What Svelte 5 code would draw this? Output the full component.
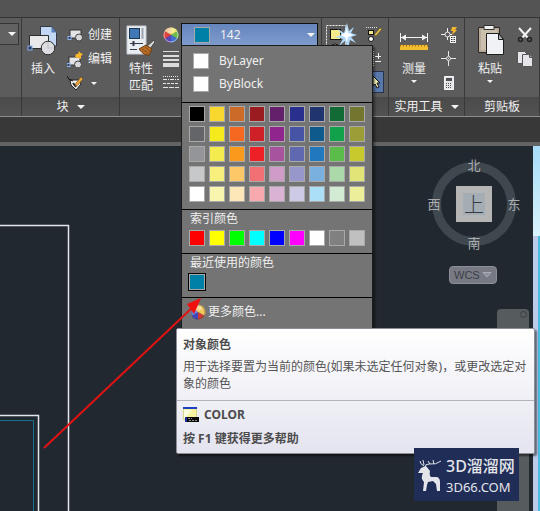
<script lang="ts">
  interface Swatch {
    id: string;
    color: string;
  }

  const palette = [
    ['#000000', '#f8d72f', '#cc6a28', '#9a1c20', '#65206b', '#292f8c', '#20356f', '#126a35', '#73762e'],
    ['#636569', '#f5ea1c', '#f4681f', '#cf2027', '#90258d', '#4654a5', '#0f5a8c', '#12a14b', '#9c9d37'],
    ['#939598', '#f4ec4e', '#f99a1d', '#ec2025', '#a8539d', '#6068b0', '#2278bd', '#5bbc4a', '#c8c92c'],
    ['#c7c8ca', '#f8f07d', '#fdc968', '#f17073', '#cf9bc7', '#9897cb', '#79b0e0', '#abd9a9', '#e2e477'],
    ['#ffffff', '#f9f5ae', '#fde6b7', '#f8a9ad', '#dab2d4', '#cdcae5', '#abdff7', '#d4ebd3', '#ecee9a']
  ];

  const trueColors: Swatch[] = palette.flatMap((row, r) => row.map((color, c) => ({ id: `${r}-${c}`, color })));

  const indexColors: Swatch[] = [
    { id: 'red', color: '#ff0000' },
    { id: 'yellow', color: '#ffff00' },
    { id: 'green', color: '#00ff00' },
    { id: 'cyan', color: '#00ffff' },
    { id: 'blue', color: '#0000ff' },
    { id: 'magenta', color: '#ff00ff' },
    { id: 'white', color: '#ffffff' },
    { id: 'gray', color: '#808080' },
    { id: 'silver', color: '#c0c0c0' }
  ];

  let current = $state('#007fa7');
</script>

{#snippet wheel()}
  <svg class="icon" viewBox="0 0 16 16" aria-hidden="true">
    <path d="M8 8 1.500 4.200A7.500 7.500 0 0 1 8 .5Z" fill="#f0b870" />
    <path d="M8 8V.5a7.500 7.500 0 0 1 6.500 3.700Z" fill="#f4e04a" />
    <path d="m8 8 6.500-3.800a7.500 7.500 0 0 1 0 7.600Z" fill="#6cc04a" />
    <path d="m8 8 6.500 3.800A7.500 7.500 0 0 1 8 15.500Z" fill="#3f6fd0" />
    <path d="M8 8v7.500a7.500 7.500 0 0 1-6.500-3.700Z" fill="#5a46b8" />
    <path d="m8 8-6.500 3.800a7.500 7.500 0 0 1 0-7.600Z" fill="#e0403c" />
    <circle cx="8" cy="8" r="7" fill="none" stroke="#e8e8e8" stroke-opacity=".6" />
    <ellipse cx="8" cy="4" rx="4" ry="2.500" fill="#fff" opacity=".4" />
  </svg>
{/snippet}

{#snippet sphere()}
  <svg class="icon" viewBox="0 0 16 16" aria-hidden="true">
    <path d="M8 8 1.500 11.800A7.500 7.500 0 0 1 8 .5Z" fill="#f3a25c" />
    <path d="M8 8V.5a7.500 7.500 0 0 1 6.500 11.300Z" fill="#f0c95a" />
    <path d="m8 8 6.500 3.800A7.500 7.500 0 0 1 8 15.500Z" fill="#cf3a35" />
    <path d="M8 8v7.500a7.500 7.500 0 0 1-6.500-3.700Z" fill="#3d48c0" />
    <path d="M8 8 1.500 11.800Q0 8 1.500 4.200Z" fill="#5f86dc" />
    <circle cx="8" cy="8" r="7" fill="none" stroke="#4c3f45" stroke-opacity=".5" />
    <ellipse cx="8" cy="4" rx="4" ry="2.500" fill="#fff" opacity=".4" />
  </svg>
{/snippet}

{#snippet blockShape()}
  <rect x="3" y="3" width="11" height="8" fill="#e4e4e6" stroke="#333" />
  <circle cx="12" cy="10.500" r="3.500" fill="#d8d8dc" stroke="#444" />
  <rect x="1" y="9.500" width="3" height="3" fill="#333b55" stroke="#8db4f0" />
{/snippet}

<div class="app">
  <header class="ribbon">
    <section class="panel">
      <div class="tools">
        <button type="button" class="stub" aria-label="列表"><span class="caret"></span></button>
      </div>
      <div class="title"></div>
    </section>

    <section class="panel">
      <div class="tools">
        <button type="button" class="big">
          <svg viewBox="0 0 32 32" aria-hidden="true">
            <path d="M13.500 2.500h11l5 6v13.500h-16z" fill="#c3d8f5" stroke="#333a45" />
            <path d="M24.500 2.500v6h5z" fill="#5a7fb8" />
            <path d="M2.500 11.500h19v13h-19z" fill="#e9e9eb" stroke="#2e2e2e" />
            <circle cx="21" cy="24" r="6.800" fill="#dcdde1" stroke="#2e2e2e" />
            <path d="M21 18v6h6" fill="none" stroke="#c2c3c8" />
            <rect x="1" y="22" width="4" height="4" fill="#2f3b58" stroke="#86b0f0" />
          </svg>
          <span>插入</span>
        </button>
        <div class="stack">
          <button type="button" class="row">
            <svg class="icon" viewBox="0 0 16 16" aria-hidden="true">{@render blockShape()}</svg>
            创建
          </button>
          <button type="button" class="row">
            <svg class="icon" viewBox="0 0 16 16" aria-hidden="true">
              <g transform="translate(-1 3)">{@render blockShape()}</g>
              <path d="m8 6 1-3 2 0 1-3 1.500 2L16 3l-2 2 0 3-3-1z" fill="#f6b62c" />
            </svg>
            编辑
          </button>
          <button type="button" class="row" aria-label="编辑属性">
            <svg class="icon" viewBox="0 0 16 16" aria-hidden="true">
              <path d="M3 5h9l2 4-5 6-5-5z" fill="#f3f3f3" stroke="#222" />
              <path d="M0 1q1 4 6 5" fill="none" stroke="#111" />
              <path d="m6 8 3 4" stroke="#222" stroke-width="2" />
              <path d="m8 11 1-3 5-6 2 2-5 6z" fill="#efa93a" stroke="#6b4210" stroke-width=".6" />
            </svg>
            <span class="caret small"></span>
          </button>
        </div>
      </div>
      <button type="button" class="title">块 <span class="caret"></span></button>
    </section>

    <section class="panel">
      <div class="tools">
        <button type="button" class="big">
          <svg viewBox="0 0 32 32" aria-hidden="true">
            <path d="M2 2h19v28H2z" fill="#e9eef3" stroke="#c9ced6" />
            <rect x="4.500" y="4.500" width="10" height="10" fill="#3f78b4" stroke="#1d3652" />
            <path d="M17.500 4v11" stroke="#9aa3ae" stroke-width="2" />
            <path d="M5 19.500h13M5 25.500h7" stroke="#333c48" />
            <path d="M8.500 17v5" stroke="#333c48" stroke-width="2" />
            <path d="m22 22 7-6 1 2-5 7z" fill="#d4d4d4" stroke="#444" />
            <path d="m14 25 7-4 6 4-3 6q-5 1-10-6z" fill="#b96f27" stroke="#6a3b10" />
            <path d="m17 25 6 4m-3-6 5 4" stroke="#8a4a15" />
          </svg>
          <span>特性<br />匹配</span>
        </button>
        <div class="stack narrow">
          <button type="button" class="row" aria-label="颜色">{@render wheel()}</button>
          <button type="button" class="row" aria-label="线宽">
            <svg class="icon" viewBox="0 0 16 16" aria-hidden="true">
              <path d="M0 0h16v1H0zM0 4h16v2H0zM0 8h16v2H0zM0 12h16v4H0z" fill="#dcdcde" />
            </svg>
          </button>
          <button type="button" class="row" aria-label="线型">
            <svg class="icon" viewBox="0 0 16 16" aria-hidden="true" fill="none" stroke="#e4e4e4">
              <path d="M0 1.500h16" stroke-dasharray="1 1" />
              <path d="M0 4.500h16" stroke-dasharray="4 1 1 1" />
              <path d="M0 8.500h16" stroke-dasharray="3 1" />
              <path d="M0 12.500h16" stroke-dasharray="5 1" />
            </svg>
          </button>
        </div>

        <div class="color-picker">
          <button type="button" class="combo" aria-haspopup="listbox" aria-expanded="true" aria-describedby="color-tip">
            <span class="swatch" style={`--swatch: ${current}`}></span>
            <span class="value">142</span>
            <span class="caret"></span>
          </button>

          <div class="menu">
            <div class="named">
              <button type="button"><span class="swatch plain"></span>ByLayer</button>
              <button type="button"><span class="swatch plain"></span>ByBlock</button>
            </div>
            <div class="group true-colors">
              <div class="swatches">
                {#each trueColors as swatch (swatch.id)}
                  <button
                    type="button"
                    class="swatch"
                    style={`--swatch: ${swatch.color}`}
                    aria-label={swatch.color}
                    onclick={() => (current = swatch.color)}
                  ></button>
                {/each}
              </div>
            </div>
            <div class="group">
              <h2>索引颜色</h2>
              <div class="swatches">
                {#each indexColors as swatch (swatch.id)}
                  <button
                    type="button"
                    class="swatch"
                    style={`--swatch: ${swatch.color}`}
                    aria-label={swatch.id}
                    onclick={() => (current = swatch.color)}
                  ></button>
                {/each}
              </div>
            </div>
            <div class="group">
              <h2>最近使用的颜色</h2>
              <div class="swatches">
                <button type="button" class="swatch selected" aria-label="142"></button>
              </div>
            </div>
            <div class="group more">
              <button type="button">{@render sphere()}更多颜色...</button>
            </div>
          </div>

          <div class="tooltip" id="color-tip" role="tooltip">
            <div class="tip-main">
              <strong>对象颜色</strong>
              <p>用于选择要置为当前的颜色(如果未选定任何对象)，或更改选定对象的颜色</p>
            </div>
            <div class="tip-command">
              <div class="command">
                <svg class="icon" viewBox="0 0 16 16" aria-hidden="true">
                  <path d="M.5 1.500h13v11H.5z" fill="#f7f5a0" stroke="#d6d48a" />
                  <path d="M1 3h8L1 12z" fill="#fdfde0" />
                  <path d="M0 1h14" stroke="#1d3fc4" stroke-width="2" />
                  <path d="M2 10h14v5H2z" fill="#0a0a0a" />
                  <path d="M2 10h2v5H2z" fill="#1a2a9a" />
                  <path d="M5 11.500h4M6 13.500h8" stroke="#888" stroke-dasharray="2 1" />
                </svg>
                COLOR
              </div>
              <div>按 F1 键获得更多帮助</div>
            </div>
          </div>
        </div>
      </div>
      <div class="title"></div>
    </section>

    <section class="panel">
      <div class="tools select-tools">
        <button type="button" aria-label="选择">
          <svg class="icon-lg" viewBox="0 0 32 32" aria-hidden="true">
            <path d="M1.500 2.500h19v20h-19z" fill="none" stroke="#eee" stroke-dasharray="2 1" />
            <rect x="5.500" y="6.500" width="10" height="10" fill="#f2e98c" stroke="#111" />
            <circle cx="10" cy="25" r="4" fill="#ddd" stroke="#111" />
            <path d="m22 0 2 8 5-4-3 6 6 2-6 2 5 6-6-3-2 8-3-7-6 5 4-7-8-2 7-2-4-6 6 4z" fill="#b4dafa" />
            <path d="m22 5 1 5 5 2-5 2-1 5-2-5-5-2 5-2z" fill="#fff" />
          </svg>
        </button>
        <div class="stack narrow">
          <button type="button" class="row" aria-label="快速选择">
            <svg class="icon" viewBox="0 0 16 16" aria-hidden="true">
              <path d="M0 .5h12" stroke="#ddd" stroke-dasharray="1 1" />
              <rect x="2.500" y="3.500" width="5" height="4" fill="#f2e98c" stroke="#111" />
              <circle cx="5" cy="12" r="2.500" fill="#fff" stroke="#111" />
              <path d="m8 8 6-7 2 1-6 7z" fill="#e6c44b" stroke="#554312" stroke-width=".5" />
            </svg>
          </button>
          <button type="button" class="row" aria-label="加减选择">
            <svg class="icon" viewBox="0 0 16 16" aria-hidden="true" fill="none" stroke="#eee">
              <path d="M7.500 0v16" stroke-dasharray="1 1" />
              <path d="M9 5.500h6M12.500 2v6M9 10.500h6" />
            </svg>
          </button>
          <button type="button" class="row pressed" aria-pressed="true" aria-label="指针">
            <svg class="icon" viewBox="0 0 16 16" aria-hidden="true">
              <path d="M6 2v10l2-2 2 4 2-1-2-4h3z" fill="#f4efb4" stroke="#111" />
            </svg>
          </button>
        </div>
      </div>
      <div class="title"></div>
    </section>

    <section class="panel wide-tool">
      <div class="tools">
        <button type="button" class="big">
          <svg viewBox="0 0 32 32" aria-hidden="true">
            <path d="M2.500 9v9M29.500 9v9M3 13.500h26" stroke="#f2f2f2" />
            <path d="m3 13.500 5-3v6zM29 13.500l-5-3v6z" fill="#f2f2f2" />
            <path d="M2 21h28v5H2z" fill="#f2bd30" />
            <path d="M2 21.500h28" stroke="#a4700d" stroke-width="2" stroke-dasharray="1 2" />
          </svg>
          <span>测量</span>
          <span class="caret small"></span>
        </button>
        <div class="stack">
          <button type="button" class="row" aria-label="快速计算">
            <svg class="icon" viewBox="0 0 16 16" aria-hidden="true">
              <path d="M0 7.500h11M6.500 1v12" stroke="#eee" />
              <circle cx="6.500" cy="7.500" r="2.500" fill="#5c5c5c" stroke="#eee" />
              <path d="m11 0 5 0-2 3h2l-5 5 1-4h-2z" fill="#f6b62c" />
              <path d="M9 9h6v7H9z" fill="#f4f4f4" />
              <path d="M10 10.500h4M10 12.500h4M10 14.500h4" stroke="#333" stroke-dasharray="1 .5" />
            </svg>
          </button>
          <button type="button" class="row" aria-label="点坐标">
            <svg class="icon" viewBox="0 0 16 16" aria-hidden="true" fill="none" stroke="#e8e8e8">
              <path d="M7.500 0v5M7.500 10v5M0 7.500h5M10 7.500h5M7 7.500h1" />
              <circle cx="7.500" cy="7.500" r="2" />
            </svg>
          </button>
          <button type="button" class="row" aria-label="计算器">
            <svg class="icon" viewBox="0 0 16 16" aria-hidden="true">
              <path d="M3.500 1.500h9v13h-9z" fill="#e4e4e6" stroke="#f4f4f4" />
              <path d="M5 3h6v3H5z" fill="#4d5158" />
              <path d="M5 8.500h6M5 10.500h6M5 12.500h6" stroke="#555" stroke-dasharray="1 1" />
            </svg>
          </button>
        </div>
      </div>
      <button type="button" class="title">实用工具 <span class="caret"></span></button>
    </section>

    <section class="panel wide-tool last">
      <div class="tools">
        <button type="button" class="big">
          <svg viewBox="0 0 32 32" aria-hidden="true">
            <path d="M4.500 3.500h21v25h-21z" fill="#b9ac9a" stroke="#2b2724" />
            <path d="M7 6h16v20H7z" fill="#cbbfae" />
            <path d="M10 1.500h10v4H10z" fill="#f0f0f0" stroke="#333" />
            <path d="M12.500 9.500h12l5 6v15h-17z" fill="#f1f2f5" stroke="#1d1d1d" />
            <path d="M24.500 9.500v6h5z" fill="#b4b7bf" stroke="#1d1d1d" />
          </svg>
          <span>粘贴</span>
          <span class="caret small"></span>
        </button>
        <div class="stack">
          <button type="button" class="row" aria-label="剪切">
            <svg class="icon" viewBox="0 0 16 16" aria-hidden="true" fill="none">
              <path d="m2 1 9 10M14 1 5 11" stroke="#f4f4f4" stroke-width="2" />
              <circle cx="3.500" cy="12.500" r="2" stroke="#222" stroke-width="1.500" />
              <circle cx="12.500" cy="12.500" r="2" stroke="#222" stroke-width="1.500" />
            </svg>
          </button>
          <button type="button" class="row" aria-label="复制">
            <svg class="icon" viewBox="0 0 16 16" aria-hidden="true" fill="#e6e6ea" stroke="#555">
              <path d="M.5.5h7l3 3v9H.500z" />
              <path d="M5.500 3.500h7l3 3v9h-10z" />
              <path d="M12.500 3.500v3h3" fill="#999" />
            </svg>
          </button>
        </div>
      </div>
      <div class="title">剪贴板</div>
    </section>
  </header>

  <div class="file-tabs"></div>

  <main class="canvas">
    <svg class="drawing" aria-hidden="true">
      <svg y="78" overflow="visible" fill="none">
        <path d="M0 1.500h68.500V900" stroke="#e4e7ea" stroke-width="1.500" />
        <path d="M0 191.500h38.500V900" stroke="#e4e7ea" stroke-width="1.500" />
        <path d="M0 196.500h33.500V900" stroke="#14728c" />
      </svg>
    </svg>

    <div class="side">
      <div class="compass">
        <span class="north">北</span>
        <span class="west">西</span>
        <button type="button" class="cube"><span>上</span></button>
        <span class="east">东</span>
        <span class="south">南</span>
      </div>
      <button type="button" class="wcs">
        WCS
        <svg viewBox="0 0 10 8" aria-hidden="true"><path d="M1 1.500h8L5 6z" fill="#8e909b" stroke="#a9acb6" /></svg>
      </button>
      <div class="navbar"><span class="close"></span></div>
    </div>
    <div class="edge"></div>
  </main>

  <svg class="arrow" viewBox="0 0 170 160" aria-hidden="true">
    <path d="M4 150 154 8" stroke="#e01212" stroke-width="2" />
    <path d="m161 0-14 6 7 10z" fill="#f01010" />
  </svg>

  <a class="watermark" href="#3d66">
    <svg viewBox="0 0 26 34" aria-hidden="true">
      <path
        d="M1 15 4 10 9 8l4 5q-1 4 1 6h6q3 1 3 5v9h-3l-1-7-3-3-5 1-1 3-1 6H6l1-9q-4-4-1-9z"
        fill="#e3e5ea"
      />
      <path d="M8 9q0-3 4-3 7 1 12-3M7 8Q3 6 3 3M7 7 6 2M13 6l-2-3m6 3-1-4" fill="none" stroke="#e3e5ea" />
    </svg>
    <span class="brand"><b>3D溜溜网</b><small>3D66.COM</small></span>
  </a>
</div>

<style>
  :global(body) {
    margin: 0;
  }

  .app {
    position: relative;
    display: flex;
    flex-direction: column;
    min-height: 100vh;
    overflow: hidden;
    background: #222830;
    color: #f0f0f0;
    font-family: 'Noto Sans', 'Noto Sans CJK SC', sans-serif;
    font-size: 12px;
    line-height: 18px;
  }

  button {
    margin: 0;
    padding: 0;
    border: 0;
    background: none;
    color: inherit;
    font: inherit;
    cursor: pointer;
  }

  svg {
    display: block;
  }

  .icon {
    width: 16px;
    height: 16px;
    flex: none;
  }

  .icon-lg {
    width: 32px;
    height: 32px;
  }

  .caret {
    display: inline-block;
    flex: none;
    border: 4px solid transparent;
    border-top-color: #f4f4f4;
    border-bottom: 0;
  }

  .caret.small {
    border-width: 3px;
    border-bottom: 0;
  }

  .ribbon {
    display: grid;
    grid-template-columns: 21px 98px 1fr 67px 76px 76px;
    padding-top: 17px;
    background: #545454;
    border-bottom: 1px solid #8c8c8c;
  }

  .panel {
    display: flex;
    flex-direction: column;
    min-width: 0;
    border-top: 1px solid #333;
    background: #5c5c5c;
  }

  .panel + .panel {
    border-left: 1px solid #393939;
  }

  .panel.last {
    border-right: 1px solid #393939;
  }

  .tools {
    display: flex;
    height: 79px;
    padding-top: 5px;
    box-sizing: border-box;
  }

  .title {
    display: flex;
    align-items: center;
    justify-content: center;
    gap: 8px;
    height: 19px;
    background: linear-gradient(#4a4a4a, #525252);
  }

  .stub {
    display: flex;
    align-items: center;
    justify-content: flex-end;
    width: 19px;
    height: 22px;
    padding-right: 2px;
    border: 1px solid #363636;
    border-left: 0;
    background: #626262;
  }

  .big {
    display: flex;
    flex-direction: column;
    align-items: center;
    width: 42px;
    line-height: 17px;
  }

  .wide-tool .big {
    width: 50px;
  }

  .big svg {
    width: 32px;
    height: 32px;
    margin: 1px 0 4px;
  }

  .big .caret {
    margin-top: 3px;
  }

  .stack {
    display: flex;
    flex-direction: column;
    padding-left: 3px;
  }

  .stack.narrow {
    padding: 0 2px 0 1px;
  }

  .row {
    display: flex;
    align-items: center;
    gap: 5px;
    height: 24px;
  }

  .row .caret {
    margin-left: 3px;
  }

  .select-tools {
    padding-left: 3px;
  }

  .select-tools > button {
    align-self: flex-start;
  }

  .select-tools .narrow {
    padding-left: 9px;
  }

  .pressed {
    border: 1px solid #26344e;
    background: #5878ac;
    height: 22px;
  }

  .wide-tool .stack {
    padding-left: 2px;
  }

  .color-picker {
    position: relative;
    flex: 1;
    margin-right: 3px;
  }

  .combo {
    display: flex;
    align-items: center;
    width: 100%;
    height: 23px;
    padding: 0 2px 0 12px;
    border: 1px solid #111;
    background: linear-gradient(#6585bc, #7e9bcd);
  }

  .combo .value {
    flex: 1;
    padding-left: 10px;
    text-align: left;
  }

  .swatch {
    flex: none;
    box-sizing: border-box;
    width: 16px;
    height: 16px;
    border: 1px solid #a9a9a9;
    background: var(--swatch);
  }

  .swatch.plain {
    background: #fff;
  }

  .menu {
    position: absolute;
    z-index: 2;
    top: 22px;
    left: 0;
    width: 190px;
    border: 1px solid #1c1c1c;
    background: #747474;
    box-shadow: 2px 2px 2px rgb(0 0 0 / 40%);
  }

  .named {
    display: flex;
    flex-direction: column;
    gap: 5px;
    padding: 6px 11px 9px;
  }

  .named button {
    display: flex;
    align-items: center;
    gap: 10px;
    line-height: 18px;
  }

  .group {
    padding: 0 7px 7px;
    border-top: 1px solid #000;
  }

  .group.true-colors {
    padding-top: 3px;
  }

  .group h2 {
    margin: 0 0 2px 1px;
    font-size: 12px;
    font-weight: 400;
    line-height: 18px;
  }

  .swatches {
    display: grid;
    grid-template-columns: repeat(9, 16px);
    gap: 4px;
  }

  .swatch.selected {
    outline: 1px solid #000;
    background: #007fa7;
  }

  .more {
    padding: 5px 8px 18px;
  }

  .more button {
    display: flex;
    align-items: center;
    gap: 2px;
  }

  .tooltip {
    position: absolute;
    z-index: 3;
    top: 305px;
    left: -5px;
    width: 357px;
    border: 1px solid #8d8d96;
    border-radius: 2px;
    background: linear-gradient(#fff, #e4e4f0);
    box-shadow: 2px 2px 2px rgb(0 0 0 / 50%);
    color: #4c4c4c;
  }

  .tip-main {
    padding: 7px 2px 8px 6px;
    border-bottom: 1px solid #b4b4ba;
  }

  .tip-main p {
    margin: 4px 0 0;
    line-height: 17px;
    color: #555;
  }

  .tip-command {
    display: flex;
    flex-direction: column;
    gap: 6px;
    padding: 5px 6px;
    font-weight: 700;
  }

  .command {
    display: flex;
    align-items: center;
    gap: 5px;
  }

  .file-tabs {
    height: 25px;
    border-bottom: 4px solid #636363;
    background: #383838;
  }

  .canvas {
    position: relative;
    display: flex;
    flex: 1;
    justify-content: flex-end;
    min-height: 365px;
  }

  .drawing {
    position: absolute;
    width: 100%;
    height: 100%;
  }

  .side {
    display: flex;
    flex-direction: column;
    width: 110px;
    padding-top: 10px;
  }

  .compass {
    position: relative;
    display: grid;
    grid-template-columns: 24px 36px 24px;
    grid-template-rows: 30px 36px 30px;
    align-items: center;
    justify-content: center;
    margin-right: 8px;
    font-family: 'Noto Sans CJK SC', sans-serif;
    font-size: 13px;
    text-align: center;
    color: #a9acae;
  }

  .compass::before {
    content: '';
    position: absolute;
    inset: 6px 9px;
    border: 9px solid #3f474f;
    border-radius: 50%;
  }

  .compass > * {
    position: relative;
  }

  .north,
  .south {
    grid-column: 1 / -1;
  }

  .north {
    align-self: start;
  }

  .south {
    align-self: end;
  }

  .west {
    margin-left: -20px;
  }

  .east {
    margin-right: -20px;
  }

  .cube {
    display: flex;
    align-items: center;
    justify-content: center;
    height: 36px;
    background: #b5b5b5;
    color: #343b42;
    font-size: 20px;
    font-weight: 300;
  }

  .cube span {
    width: 22px;
    background: #a5adb4;
    line-height: 22px;
  }

  .wcs {
    display: flex;
    align-items: center;
    justify-content: space-between;
    width: 48px;
    height: 18px;
    margin: 14px 0 0 26px;
    padding: 0 4px;
    border: 1px solid #8c8e98;
    border-radius: 4px;
    background: #777983;
    color: #3c4048;
    font-family: 'Liberation Sans', sans-serif;
    font-size: 11px;
  }

  .wcs svg {
    width: 10px;
    height: 8px;
  }

  .navbar {
    flex: 1;
    width: 32px;
    margin: 25px 4px 0 auto;
    border-radius: 4px 4px 0 0;
    background: #565b5e;
  }

  .close {
    display: block;
    width: 5px;
    height: 5px;
    margin: 2px 2px 0 auto;
    border: 1px solid #3a3e42;
    border-radius: 50%;
  }

  .edge {
    width: 7px;
    background:
      linear-gradient(#a8dcf8, #d8f4fc) 0 0 / 100% 90px no-repeat,
      linear-gradient(90deg, #bccbea 5px, #4dbbe0 5px);
  }

  .arrow {
    position: absolute;
    z-index: 4;
    top: 298px;
    left: 40px;
    width: 170px;
    height: 160px;
    fill: none;
    pointer-events: none;
  }

  .watermark {
    position: absolute;
    z-index: 5;
    right: 21px;
    bottom: 10px;
    display: flex;
    align-items: center;
    gap: 3px;
    box-sizing: border-box;
    width: 105px;
    height: 53px;
    padding-left: 3px;
    background: #202d57;
    color: #e3e5ea;
    text-decoration: none;
  }

  .watermark svg {
    width: 26px;
    height: 34px;
  }

  .brand {
    display: flex;
    flex-direction: column;
    font-family: 'Noto Sans', 'Noto Sans CJK SC', sans-serif;
  }

  .watermark b {
    font-size: 16px;
    font-weight: 500;
    line-height: 24px;
  }

  .watermark small {
    font-size: 13px;
    line-height: 18px;
  }
</style>
